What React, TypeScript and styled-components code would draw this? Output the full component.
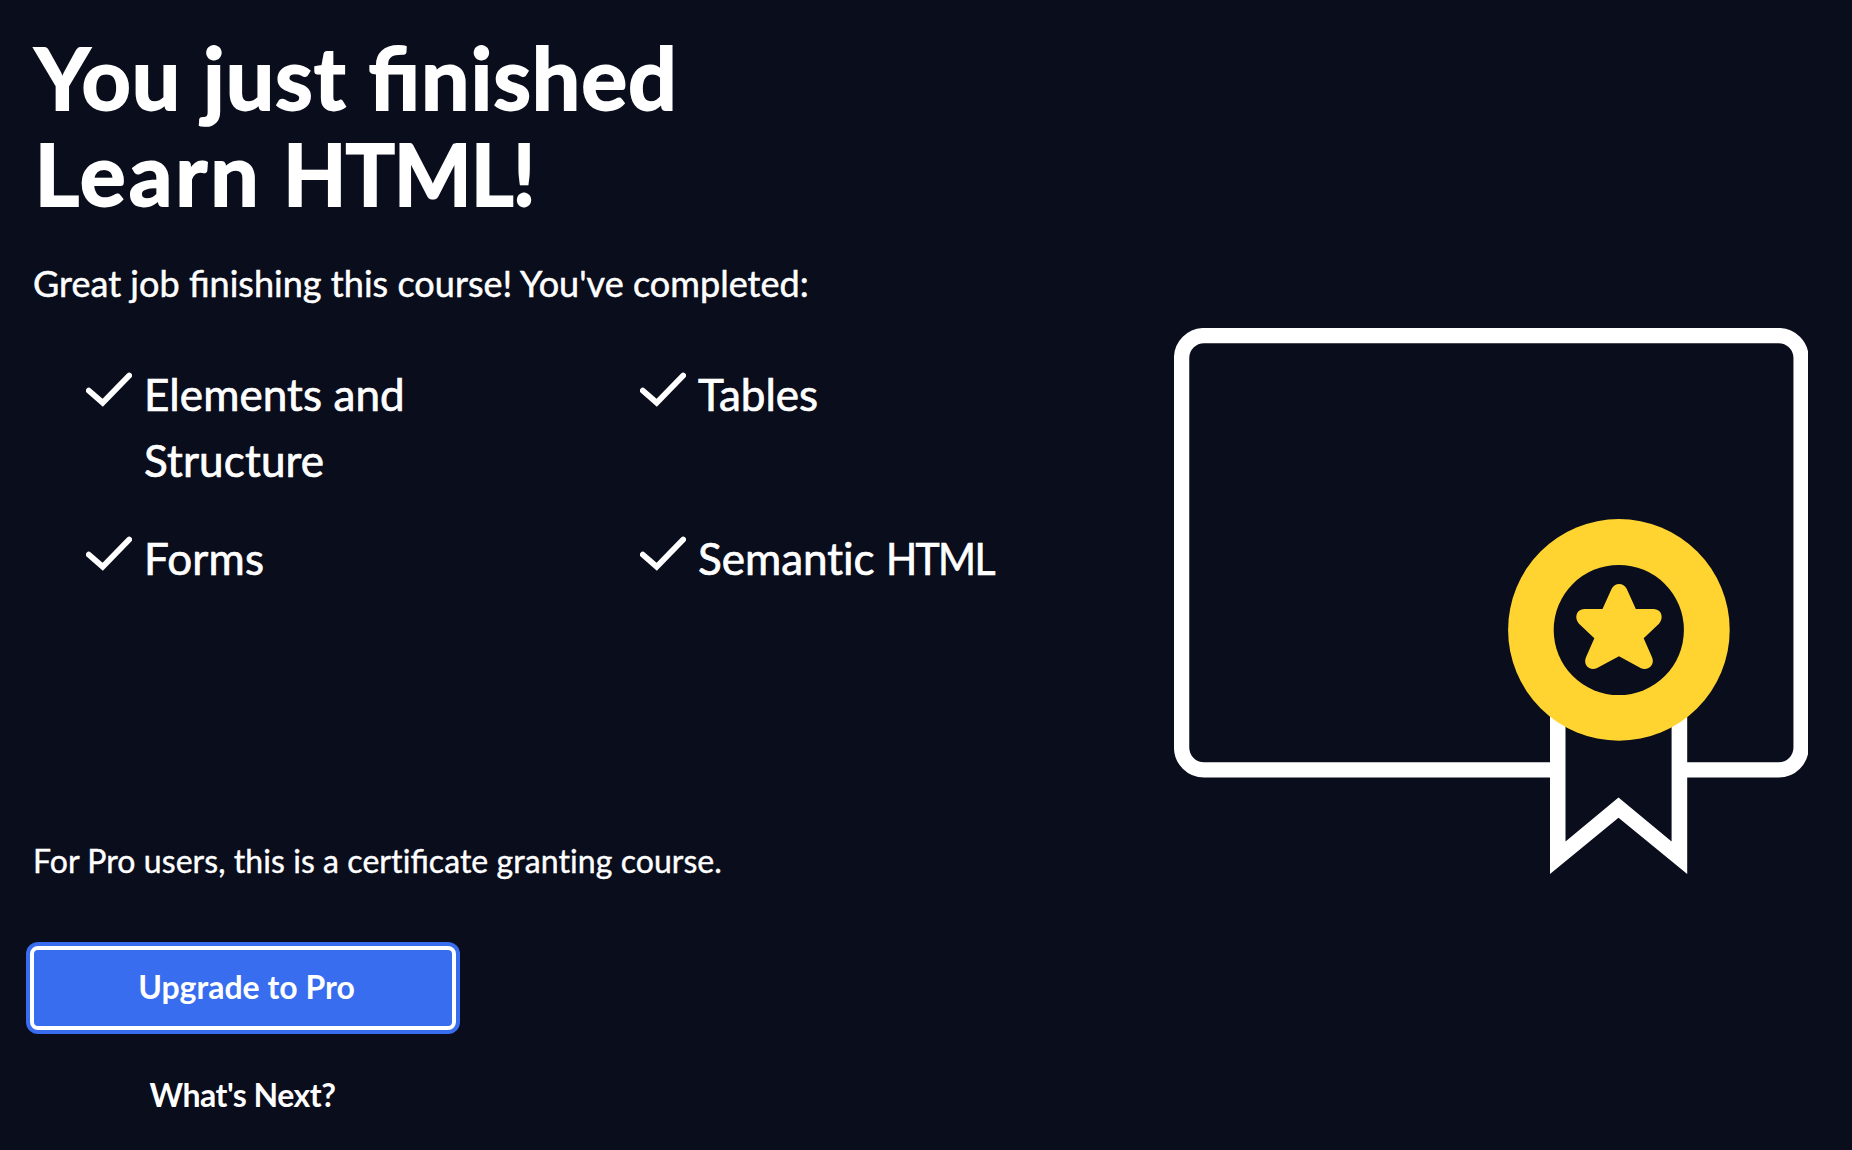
import React from "react";
import styled, { createGlobalStyle } from "styled-components";

const colors = {
  navy: "#0a0d1c",
  white: "#ffffff",
  blue: "#376dee",
  yellow: "#ffd431",
};

const GlobalStyle = createGlobalStyle`
  *, *::before, *::after { box-sizing: border-box; }
  html, body { margin: 0; padding: 0; background: ${colors.navy}; }
  body {
    font-family: Lato, "Liberation Sans", sans-serif;
    color: ${colors.white};
    font-variant-ligatures: none;
    overflow: hidden;
  }
`;

const Page = styled.main`
  display: flex;
  justify-content: space-between;
  width: 1852px;
  height: 1150px;
  padding: 29px 44px 0 33px;
  background: ${colors.navy};
`;

const Content = styled.section`
  display: flex;
  flex-direction: column;
  align-items: flex-start;
  width: 1100px;
`;

const Text = styled.span<{ $spacing?: number }>`
  letter-spacing: ${(p) => p.$spacing ?? 0}px;
`;

const Narrow = styled(Text)<{ $scale: number }>`
  display: inline-block;
  transform: scaleX(${(p) => p.$scale});
  transform-origin: left;
`;

const Ligature = styled.span`
  font-variant-ligatures: normal;
  font-feature-settings: "liga" 1;
`;

const Title = styled.h1`
  display: flex;
  flex-direction: column;
  margin: 0;
  padding-left: 1.5px;
  font-size: 86px;
  line-height: 96px;
  font-weight: 700;
  white-space: nowrap;
  -webkit-text-stroke: 1.8px ${colors.white};
`;

const Lead = styled.p`
  margin: 35px 0 0;
  font-size: 36px;
  line-height: 54px;
  white-space: nowrap;
  -webkit-text-stroke: 0.5px ${colors.white};
`;

const Modules = styled.ul`
  display: grid;
  grid-template-columns: 554px 500px;
  row-gap: 32px;
  margin: 51px 0 0;
  padding: 0 0 0 53px;
  list-style: none;
`;

const Module = styled.li`
  display: flex;
  align-items: flex-start;
  gap: 12px;
  font-size: 44px;
  line-height: 66px;
  -webkit-text-stroke: 0.7px ${colors.white};
`;

const ModuleName = styled.span`
  width: 372px;
`;

const CheckIcon = styled.svg`
  flex: none;
  display: block;
  width: 46px;
  height: 36px;
  margin-top: 11px;
`;

const Note = styled.p`
  margin: 246px 0 0;
  font-size: 32px;
  line-height: 48px;
  white-space: nowrap;
  -webkit-text-stroke: 0.4px ${colors.white};
`;

const Actions = styled.div`
  display: flex;
  flex-direction: column;
  gap: 40px;
  width: 426px;
  margin: 61px 0 0 -3px;
`;

const Button = styled.button<{ $primary?: boolean }>`
  display: flex;
  align-items: center;
  justify-content: center;
  width: 100%;
  height: ${(p) => (p.$primary ? 84 : 52)}px;
  padding: ${(p) => (p.$primary ? "0 0 2px 7px" : "0 1px 3px 0")};
  border: ${(p) => (p.$primary ? `4px solid ${colors.white}` : "0")};
  border-radius: 8px;
  background: ${(p) => (p.$primary ? colors.blue : "transparent")};
  box-shadow: ${(p) => (p.$primary ? `0 0 0 4px ${colors.blue}` : "none")};
  color: ${colors.white};
  font-family: inherit;
  font-size: 32px;
  line-height: 48px;
  font-weight: 700;
  font-variant-ligatures: none;
`;

const Certificate = styled.svg`
  flex: none;
  display: block;
  width: 634px;
  height: 550px;
  margin-top: 299px;
`;

const Check = () => (
  <CheckIcon viewBox="0 0 46 36" fill="none">
    <path
      d="M2.8 18.600 16.700 30.800 43.200 3.500"
      stroke={colors.white}
      strokeWidth="5.8"
      strokeLinecap="round"
      strokeLinejoin="miter"
    />
  </CheckIcon>
);

const modules: React.ReactNode[] = [
  <>
    <Text $spacing={0.1}>Elements and</Text> <Text $spacing={0.15}>Structure</Text>
  </>,
  <Text>Tables</Text>,
  <Text $spacing={0.2}>Forms</Text>,
  <>
    <Text>Semantic </Text>
    <Narrow $scale={0.93} $spacing={-1.8}>
      HTML
    </Narrow>
  </>,
];

export default function App() {
  return (
    <>
      <GlobalStyle />
      <Page>
        <Content>
          <Title>
            <Text $spacing={0.9}>
              You just <Ligature>fi</Ligature>nished
            </Text>
            <span>
              <Text $spacing={2.9}>Learn</Text>{" "}
              <Narrow $scale={0.96} $spacing={-1.2}>
                HTML!
              </Narrow>
            </span>
          </Title>
          <Lead>
            <Text $spacing={0.03}>
              Great job <Ligature>fi</Ligature>nishing this course! You've completed:
            </Text>
          </Lead>
          <Modules>
            {modules.map((name, i) => (
              <Module key={i}>
                <Check />
                <ModuleName>{name}</ModuleName>
              </Module>
            ))}
          </Modules>
          <Note>
            <Text $spacing={0.07}>
              For Pro users, this is a certi<Ligature>fi</Ligature>cate granting course.
            </Text>
          </Note>
          <Actions>
            <Button $primary>
              <Text>Upgrade to Pro</Text>
            </Button>
            <Button>
              <Text $spacing={-0.5}>What's Next?</Text>
            </Button>
          </Actions>
        </Content>
        <Certificate viewBox="1174 328 634 550" fill="none">
          <rect
            x="1181.6"
            y="335.6"
            width="619.5"
            height="434.3"
            rx="22.5"
            stroke={colors.white}
            strokeWidth="15.3"
          />
          <path d="M1550 700H1687.2V874L1618.5 817.7 1550 874Z" fill={colors.white} />
          <path d="M1565.5 700H1671.6V841.4L1618.5 797.4 1565.5 841.4Z" fill={colors.navy} />
          <circle cx="1618.9" cy="629.9" r="110.8" fill={colors.yellow} />
          <circle cx="1618.8" cy="630" r="65.1" fill={colors.navy} />
          <path
            transform="translate(1480 500) scale(.33333)"
            d="M395 266C404 247 431 247 440 266L467.500 327H521C544 327 553 353 537 371L491 415 516 472C526 495 504 514 483 505L417 469 350 505C329 514 308 495 318 472L343 415 297 371C281 353 290 327 313 327H367.500Z"
            fill={colors.yellow}
          />
        </Certificate>
      </Page>
    </>
  );
}
